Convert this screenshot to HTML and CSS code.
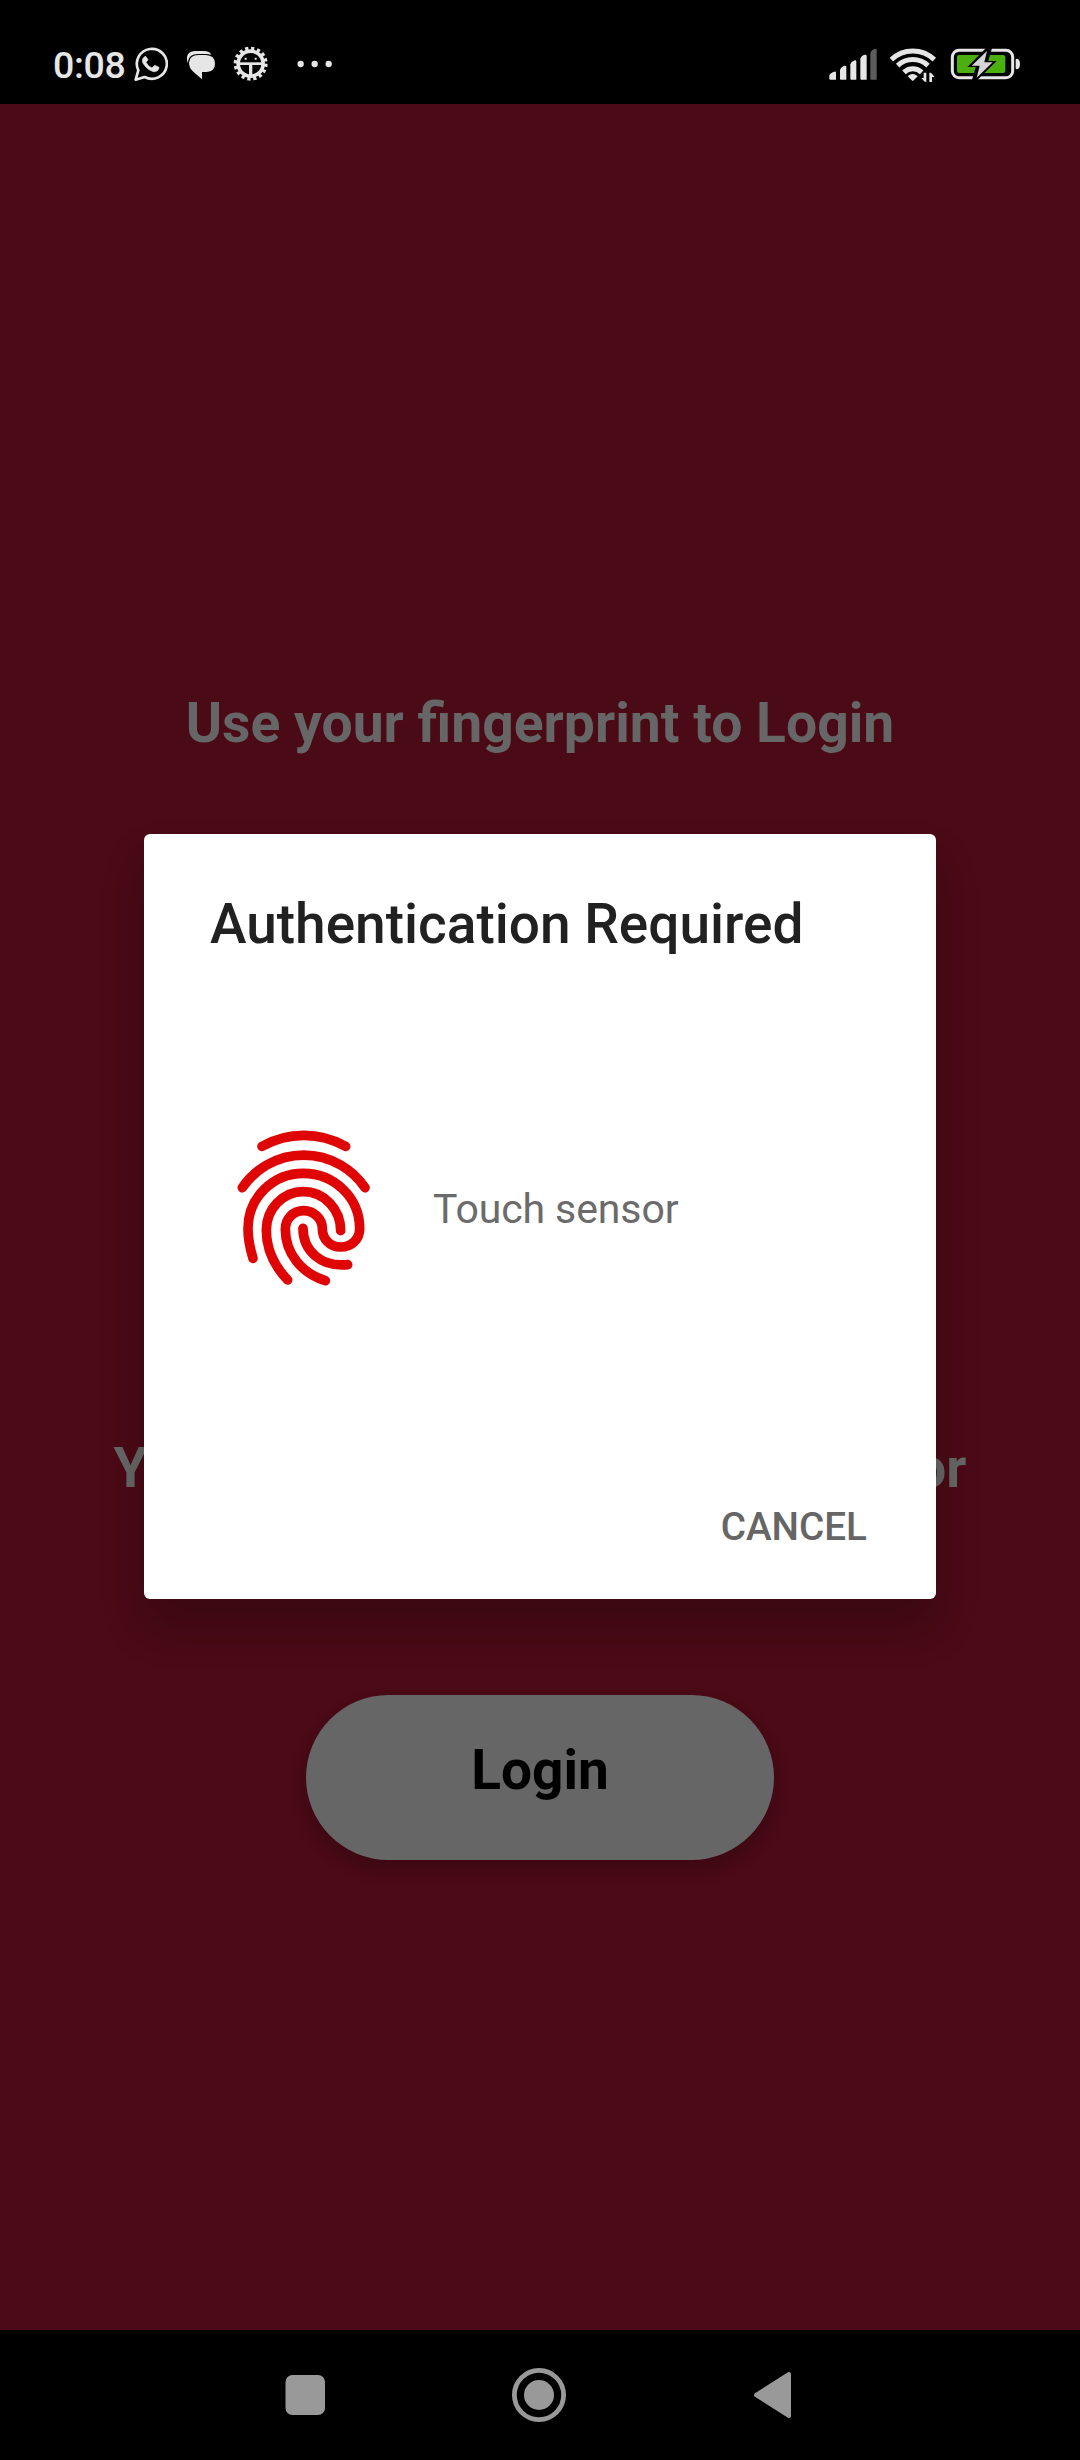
FILE: index.html
```html
<!DOCTYPE html>
<html lang="en">
<head>
<meta charset="utf-8">
<title>Login</title>
<link rel="stylesheet" href="styles.css">
</head>
<body>
<div class="screen">
  <header class="status-bar">
    <div class="status-left">
      <span class="clock">0:08</span>
      <svg class="icon-whatsapp" viewBox="282 48 102 108" fill="none" stroke="#e6e6e6">
        <path d="M287 149 L295 121 A45 45 0 1 1 314 141 Z" stroke-width="8" stroke-linejoin="round"/>
        <path d="M317 79 C306 83 305 94 311 103 Q322 120 340 125 C350 126 357 121 357 112 L344 106 L336 114 Q324 109 318 97 L324 89 Z" fill="#e6e6e6" stroke="#e6e6e6" stroke-width="2" stroke-linejoin="round"/>
      </svg>
      <svg class="icon-chat" viewBox="438 60 90 90">
        <path d="M443 99 Q440 91 441 81 Q443 64 465 63 H493 Q508 63 514 74 Q506 72 497 72 H474 Q448 73 445 91Z" fill="#e6e6e6"/>
        <path d="M475 75 H497 Q525 76 525 101 Q525 124 500 126 H486 V148 L460 125 Q447 114 447 98 Q449 76 475 75Z" fill="#e6e6e6"/>
      </svg>
      <svg class="icon-gear" viewBox="580 48 106 106" fill="none" stroke="#e6e6e6">
        <circle cx="633" cy="101" r="45" stroke-width="12" stroke-dasharray="9.5 8.17"/>
        <circle cx="633" cy="101" r="37.5" stroke-width="11"/>
        <path d="M595 101 H671" stroke-width="8"/>
        <path d="M633 101 V139" stroke-width="10"/>
        <path d="M618 83 v6 M648 83 v6" stroke-width="6"/>
      </svg>
      <svg class="icon-more" viewBox="772 90 108 24" fill="#e6e6e6">
        <circle cx="783" cy="102" r="9.5"/><circle cx="825" cy="102" r="9.5"/><circle cx="867" cy="102" r="9.5"/>
      </svg>
    </div>
    <div class="status-right">
      <svg class="icon-signal" viewBox="57 55 144 96" fill="#e6e6e6">
        <path d="M58 136 Q60 132 70 127 Q78 123 78 129 V150 H61 Q58 150 58 147Z"/>
        <path d="M90 120 Q92 114 101 109 Q109 106 109 112 V150 H93 Q90 150 90 147Z"/>
        <path d="M121 104 Q123 97 131 93 Q139 90 139 96 V150 H124 Q121 150 121 147Z"/>
        <path d="M151 87 Q153 80 161 76 Q170 73 170 79 V150 H154 Q151 150 151 147Z"/>
        <path d="M181 70 Q183 63 191 59 Q200 55 200 62 V150 H184 Q181 150 181 147Z" fill="#5c5c5c"/>
      </svg>
      <svg class="icon-wifi" viewBox="237 48 144 111" fill="none" stroke="#e6e6e6">
        <path d="M244 89 A93 93 0 0 1 373 89" stroke-width="15"/>
        <path d="M263 107 A66 66 0 0 1 354 107" stroke-width="15"/>
        <path d="M282 127 A38 38 0 0 1 335 127" stroke-width="15"/>
        <path d="M293 139 Q308 125 323 139 L311 151 Q308 154 305 151Z" fill="#e6e6e6" stroke="none"/>
        <path d="M349 128 V155 H344 L334 144 H341 V128Z M358 128 V156 H366 V141 H374 L363 128Z" fill="#e6e6e6" stroke="none"/>
      </svg>
      <svg class="icon-battery" viewBox="420 54 213 96">
        <rect x="427" y="61" width="181" height="82" rx="20" fill="none" stroke="#e6e6e6" stroke-width="9"/>
        <rect x="441" y="75" width="145" height="54" rx="7" fill="#4caf10"/>
        <path d="M617 89 Q617 86 621 86 Q630 88 630 102 Q630 116 621 118 Q617 118 617 115Z" fill="#e6e6e6"/>
        <path d="M528 54 L472 111 H497 L486 150 H502 L560 93 H535 L546 54Z" fill="#000"/>
        <path d="M531 63 L485 107 H509 L500 143 L548 97 H523Z" fill="#d5d5d5"/>
      </svg>
    </div>
  </header>

  <main class="app">
    <h1 class="heading">Use your fingerprint to Login</h1>
    <p class="support"><span>Y</span><span>or</span></p>
    <button class="login">Login</button>

    <section class="dialog" role="dialog">
      <h2 class="dialog-title">Authentication Required</h2>
      <div class="dialog-body">
        <svg class="fingerprint" viewBox="0 0 510 570" fill="none" stroke="#e00505" stroke-width="29" stroke-linecap="round">
          <path d="M126 109 A255 255 0 0 1 377 109"/>
          <path d="M67 233 A222 222 0 0 1 435 233"/>
          <path d="M99 445 C90 415 84 390 84 356 C84 263 158 190 250 190 C343 190 419 263 419 356 C419 387 395 411 362 411 C329 411 307 386 307 356 C307 326 282 302 251 302 C220 302 196 326 196 358 C196 430 245 490 316 512"/>
          <path d="M203 510 C160 465 139 415 139 360 C139 297 188 245 250 245 C312 245 362 297 362 362"/>
          <path d="M249 355 C249 420 300 472 383 464"/>
        </svg>
        <span class="hint">Touch sensor</span>
      </div>
      <button class="cancel">CANCEL</button>
    </section>
  </main>

  <nav class="nav-bar">
    <svg viewBox="0 0 60 60"><rect x="10.5" y="10" width="39.5" height="40" rx="7" fill="#999"/></svg>
    <svg viewBox="0 0 60 60"><circle cx="30" cy="30" r="24.6" fill="none" stroke="#999" stroke-width="4.8"/><circle cx="30" cy="30" r="15" fill="#999"/></svg>
    <svg viewBox="0 0 60 60"><path d="M13 30 L46 9 V51Z" fill="#999" stroke="#999" stroke-width="4" stroke-linejoin="round"/></svg>
  </nav>
</div>
</body>
</html>
```
FILE: styles.css
```css
* { box-sizing: border-box; margin: 0; padding: 0; }

body {
  width: 1080px;
  font-family: Roboto, "Liberation Sans", sans-serif;
  background: #000;
}

button { border: 0; font-family: inherit; }
svg { display: block; flex: none; }

.screen {
  display: flex;
  flex-direction: column;
  height: 2460px;
  overflow: hidden;
}

.status-bar {
  display: flex;
  justify-content: space-between;
  height: 104px;
  padding: 0 60px 0 53px;
  background: #000;
}

.status-left, .status-right { display: flex; align-items: flex-start; }

.clock {
  width: 81px;
  margin-top: 43px;
  font-size: 37.5px;
  line-height: 45px;
  font-weight: 500;
  letter-spacing: -.3px;
  color: #e6e6e6;
}

.icon-whatsapp { width: 34px; height: 36px; margin-top: 46px; }
.icon-chat { width: 30px; height: 30px; margin: 50px 0 0 18px; }
.icon-gear { width: 35.3px; height: 35.3px; margin: 46px 0 0 17.4px; }
.icon-more { width: 36px; height: 8px; margin: 60px 0 0 28.6px; }

.status-right { width: 191px; }
.icon-signal { width: 48px; height: 32px; margin-top: 48.3px; }
.icon-wifi { width: 48px; height: 37px; margin: 46px 0 0 12px; }
.icon-battery { width: 71px; height: 32px; margin: 48px 0 0 13px; }

.app {
  position: relative;
  display: flex;
  flex-direction: column;
  align-items: center;
  height: 2226px;
  padding-top: 587px;
  background: #4a0a16;
}

.heading {
  font-size: 55.25px;
  line-height: 64px;
  font-weight: 700;
  color: #666;
}

.support {
  display: flex;
  justify-content: space-between;
  width: 853px;
  margin-top: 681px;
  font-size: 55px;
  line-height: 64px;
  font-weight: 700;
  color: #666;
}

.login {
  width: 468px;
  height: 165px;
  margin-top: 195px;
  padding-bottom: 16px;
  border-radius: 83px;
  background: #666;
  box-shadow: 0 9px 18px rgba(0, 0, 0, .2);
  font-size: 55px;
  font-weight: 700;
  color: #000;
}

/* Modal lies over the dimmed login page */
.dialog {
  position: absolute;
  top: 730px;
  left: 144px;
  display: flex;
  flex-direction: column;
  width: 792px;
  height: 765px;
  padding: 58px 66px 44px;
  border-radius: 6px;
  background: #fff;
  box-shadow: 0 28px 44px rgba(0, 0, 0, .2);
}

.dialog-title {
  font-size: 55px;
  line-height: 64px;
  font-weight: 500;
  color: #212121;
}

.dialog-body {
  display: flex;
  align-items: center;
  height: 190px;
  margin-top: 154px;
  margin-left: 10px;
}

.fingerprint { width: 170px; height: 190px; }

.hint {
  margin: 7px 0 0 43px;
  font-size: 41px;
  line-height: 48px;
  letter-spacing: -.1px;
  color: #6b6b6b;
}

.cancel {
  align-self: flex-end;
  margin-top: 204px;
  margin-right: 3px;
  background: none;
  font-size: 38.7px;
  line-height: 45px;
  font-weight: 500;
  color: #666;
}

.nav-bar {
  display: flex;
  justify-content: space-between;
  height: 130px;
  padding: 35px 277px 0 275px;
  background: #000;
}

.nav-bar svg { width: 60px; height: 60px; }
```
